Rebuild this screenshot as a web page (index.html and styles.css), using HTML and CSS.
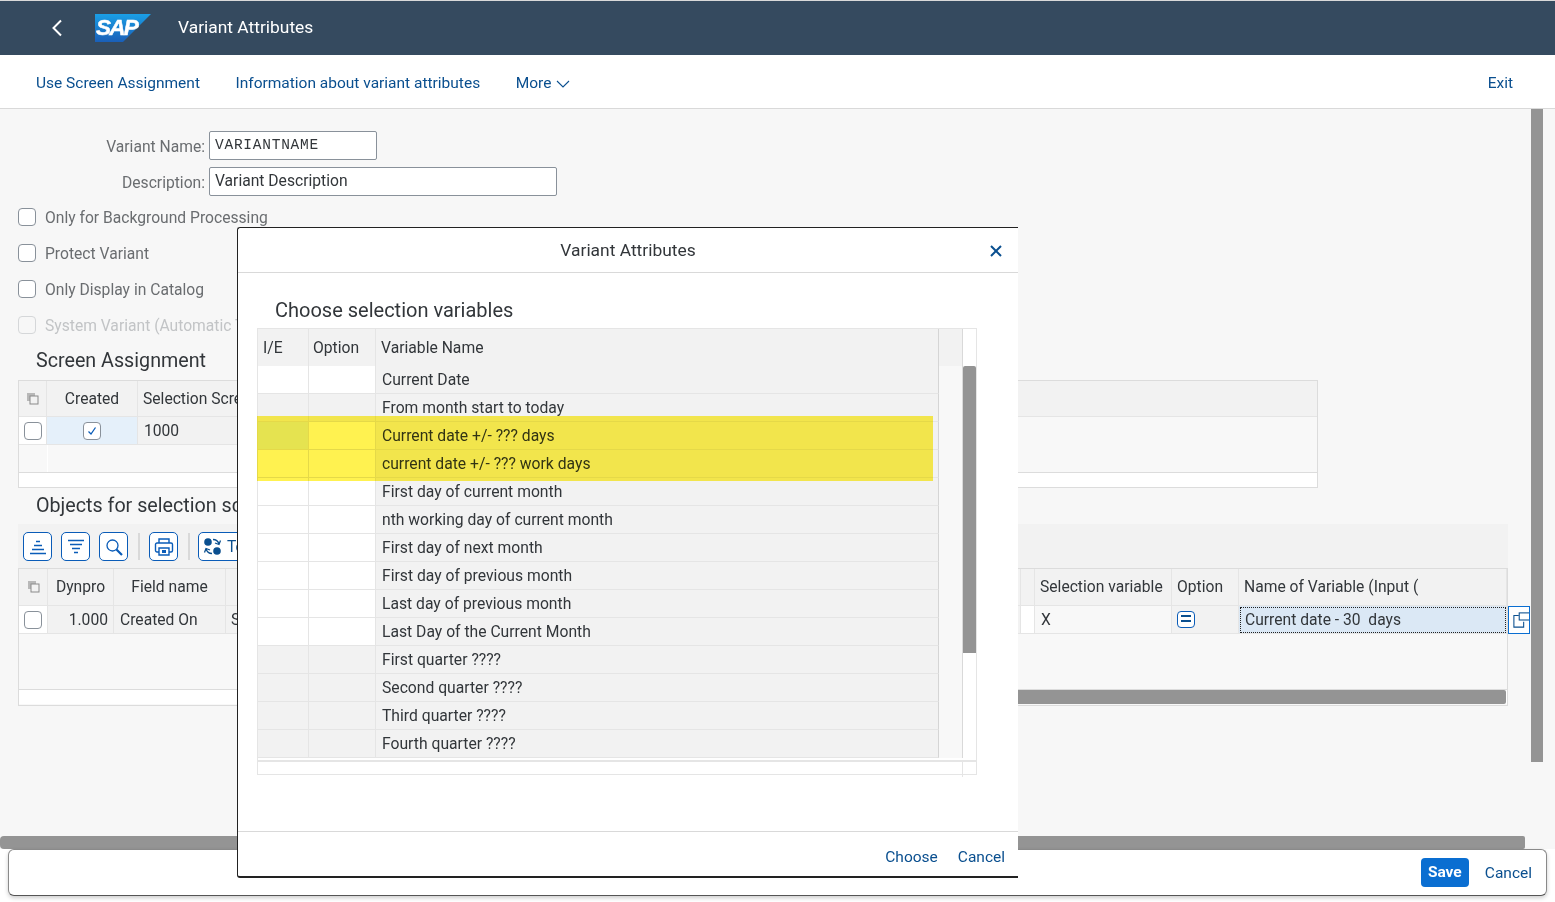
FILE: index.html
```html
<!DOCTYPE html>
<html lang="en">
<head>
<meta charset="utf-8">
<title>Variant Attributes</title>
<link rel="stylesheet" href="styles.css">
</head>
<body>
<div class="page">
  <header class="shell">
    <svg class="back" width="12" height="18" viewBox="0 0 12 18"><path d="M10 1.500 2.500 9l7.500 7.500" fill="none" stroke="#fff" stroke-width="2"/></svg>
    <div class="logo"><svg width="56" height="28" viewBox="0 0 56 28"><defs><linearGradient id="g" x1="0" y1="0" x2="0" y2="1"><stop offset="0" stop-color="#1a9fe6"/><stop offset="1" stop-color="#1a5fb8"/></linearGradient></defs><polygon points="0,0 56,0 28,28 0,28" fill="url(#g)"/></svg><span class="logo-text">SAP</span></div>
    <div class="shell-title">Variant Attributes</div>
  </header>
  <nav class="actions">
    <a class="act">Use Screen Assignment</a>
    <a class="act">Information about variant attributes</a>
    <a class="act">More <svg class="caret" width="14" height="8" viewBox="0 0 14 8"><path d="M1 1l6 6 6-6" fill="none" stroke="#0a4f8f" stroke-width="1.100"/></svg></a>
    <a class="act exit">Exit</a>
  </nav>
  <main class="content">
    <div class="field"><label class="flabel">Variant Name:</label><div class="input name mono">VARIANTNAME</div></div>
    <div class="field second"><label class="flabel">Description:</label><div class="input desc">Variant Description</div></div>
    <div class="checks">
      <div class="check"><span class="box"></span>Only for Background Processing</div>
      <div class="check"><span class="box"></span>Protect Variant</div>
      <div class="check"><span class="box"></span>Only Display in Catalog</div>
      <div class="check off"><span class="box"></span>System Variant (Automatic Transport)</div>
    </div>
    <h2 class="title">Screen Assignment</h2>
    <section class="tbl one">
      <div class="row head r1">
        <div class="cell sel"><svg width="13" height="13" viewBox="0 0 13 13"><rect x="1" y="1" width="8" height="8" fill="#b8b8b8"/><rect x="4" y="4" width="8" height="8" fill="#f2f2f2" stroke="#8a8a8a"/></svg></div>
        <div class="cell ctr">Created</div>
        <div class="cell">Selection Screen</div>
        <div class="cell rest"></div>
      </div>
      <div class="row body r1">
        <div class="cell white"><span class="box"></span></div>
        <div class="cell ctr blue"><span class="box small"><svg width="12" height="12" viewBox="0 0 12 12"><path d="M2.500 6.500 5 9l4.500-6.500" fill="none" stroke="#0a5cb8" stroke-width="1.300"/></svg></span></div>
        <div class="cell lead">1000</div>
        <div class="cell blank"></div>
      </div>
      <div class="empty"></div>
      <div class="tfoot"></div>
    </section>
    <h2 class="title second-title">Objects for selection screen</h2>
    <div class="tools">
      <span class="tool"><svg width="20" height="16" viewBox="0 0 20 16"><path d="M8 2.500h4M6 6.500h8M4 10.500h12M2 14.500h16" stroke="#0a5cb8" stroke-width="1.600" fill="none"/></svg></span>
      <span class="tool"><svg width="20" height="16" viewBox="0 0 20 16"><path d="M2 1.500h16M4 5.500h12M6 9.500h8M8 13.500h4" stroke="#0a5cb8" stroke-width="1.600" fill="none"/></svg></span>
      <span class="tool"><svg width="18" height="18" viewBox="0 0 18 18"><circle cx="7.500" cy="7.500" r="5.500" fill="none" stroke="#0a5cb8" stroke-width="1.300"/><path d="M11.500 11.500 17 17" stroke="#0a5cb8" stroke-width="2.200"/></svg></span>
      <span class="sep"></span>
      <span class="tool"><svg width="20" height="20" viewBox="0 0 20 20"><path d="M5 6V2h10v4M5 15H3a1.500 1.500 0 0 1-1.500-1.500V7.500A1.500 1.500 0 0 1 3 6h14a1.500 1.500 0 0 1 1.500 1.500v6A1.500 1.500 0 0 1 17 15h-2M5 11h10v7H5z" fill="none" stroke="#0a5cb8" stroke-width="1.400"/><rect x="8" y="13" width="4" height="3" fill="#0a5cb8"/></svg></span>
      <span class="sep"></span>
      <span class="tool wide"><svg width="19" height="19" viewBox="0 0 19 19"><circle cx="5" cy="5" r="3.800" fill="#0a4f8f"/><circle cx="14" cy="14" r="3.800" fill="#0a4f8f"/><path d="M10 2.500c3 0 5 1.500 6 4.500M17.500 3.500 16 7.500l-4-1.500M9 16.500c-3 0-5-1.500-6-4.500M1.500 15.500 3 11.500l4 1.500" fill="none" stroke="#0a4f8f" stroke-width="1.300"/></svg><span class="tool-text">Technical</span></span>
    </div>
    <section class="tbl two">
      <div class="row head r2">
        <div class="cell sel"><svg width="13" height="13" viewBox="0 0 13 13"><rect x="1" y="1" width="8" height="8" fill="#b8b8b8"/><rect x="4" y="4" width="8" height="8" fill="#f2f2f2" stroke="#8a8a8a"/></svg></div>
        <div class="cell ctr">Dynpro</div>
        <div class="cell ctr">Field name</div>
        <div class="cell"></div>
        <div class="cell"></div>
        <div class="cell">Selection variable</div>
        <div class="cell">Option</div>
        <div class="cell">Name of Variable (Input (</div>
      </div>
      <div class="row body r2">
        <div class="cell white"><span class="box"></span></div>
        <div class="cell end">1.000</div>
        <div class="cell">Created On</div>
        <div class="cell">S</div>
        <div class="cell white"></div>
        <div class="cell soft">X</div>
        <div class="cell"><span class="opt"></span></div>
        <div class="cell focus">Current date - 30&nbsp; days</div>
      </div>
      <div class="spacer"></div>
      <div class="track"><div class="thumb"></div></div>
      <span class="pop"><svg width="18" height="18" viewBox="0 0 18 18"><path d="M6.500 4H1v13h11v-6" fill="none" stroke="#0a4f8f" stroke-width="1.200"/><rect x="7" y="1" width="12" height="8" fill="#fff" stroke="#0a4f8f" stroke-width="1.200"/></svg></span>
    </section>
  </main>
  <div class="hbar"></div>
  <div class="vbar"></div>
  <footer class="bar">
    <span class="save">Save</span>
    <a class="cancel">Cancel</a>
  </footer>
  <div class="dialog">
    <div class="dhead">
      <span class="dtitle">Variant Attributes</span>
      <svg class="close" width="12" height="12" viewBox="0 0 12 12"><path d="M1 1l10 10M11 1 1 11" stroke="#0a4f8f" stroke-width="2" fill="none"/></svg>
    </div>
    <div class="dbody">
      <h3 class="dsub">Choose selection variables</h3>
      <div class="list">
        <div class="lrow lhead"><div>I/E</div><div>Option</div><div>Variable Name</div><div class="lgap"></div></div>
        <div class="lrow w"><div></div><div></div><div>Current Date</div><div class="lgap"></div></div>
        <div class="lrow g"><div></div><div></div><div>From month start to today</div><div class="lgap"></div></div>
        <div class="lrow h1"><div></div><div></div><div>Current date +/- ??? days</div><div class="lgap"></div></div>
        <div class="lrow w"><div></div><div></div><div>current date +/- ??? work days</div><div class="lgap"></div></div>
        <div class="lrow w"><div></div><div></div><div>First day of current month</div><div class="lgap"></div></div>
        <div class="lrow w"><div></div><div></div><div>nth working day of current month</div><div class="lgap"></div></div>
        <div class="lrow w"><div></div><div></div><div>First day of next month</div><div class="lgap"></div></div>
        <div class="lrow w"><div></div><div></div><div>First day of previous month</div><div class="lgap"></div></div>
        <div class="lrow w"><div></div><div></div><div>Last day of previous month</div><div class="lgap"></div></div>
        <div class="lrow w"><div></div><div></div><div>Last Day of the Current Month</div><div class="lgap"></div></div>
        <div class="lrow g"><div></div><div></div><div>First quarter ????</div><div class="lgap"></div></div>
        <div class="lrow g"><div></div><div></div><div>Second quarter ????</div><div class="lgap"></div></div>
        <div class="lrow g"><div></div><div></div><div>Third quarter ????</div><div class="lgap"></div></div>
        <div class="lrow g"><div></div><div></div><div>Fourth quarter ????</div><div class="lgap"></div></div>
        <div class="lfoot"><div></div><div></div></div>
        <div class="lscroll"></div>
        <div class="lscroll-head"></div>
        <div class="mark"></div>
      </div>
    </div>
    <div class="dfoot"><a class="act">Choose</a><a class="act">Cancel</a></div>
  </div>
</div>
</body>
</html>
```
FILE: styles.css
```css
* { box-sizing: border-box; }
html, body { margin: 0; padding: 0; }
body { font-family: Roboto, "Noto Sans", sans-serif; font-size: 15.5px; color: #32363a; background: #fff; }
.page { position: relative; width: 1555px; height: 902px; overflow: hidden; background: #fff; }

.shell { height: 55px; background: #354a5f; border-top: 1px solid #d9d9d9; display: flex; align-items: center; color: #fff; padding-left: 51px; }
.back { flex: none; margin-right: 32px; }
.logo { position: relative; width: 56px; height: 28px; margin-right: 27px; flex: none; }
.logo svg { display: block; }
.logo-text { position: absolute; left: 1px; top: 0; font: italic 700 22.5px/27px "Liberation Sans", sans-serif; letter-spacing: -1.800px; color: #fff; -webkit-text-stroke: .5px #fff; }
.shell-title { font-size: 17.4px; padding-bottom: 2px; }

.actions { height: 54px; border-bottom: 1px solid #d9d9d9; display: flex; align-items: center; padding: 2px 42px 0 36px; gap: 35.5px; background: #fff; }
.act { color: #0a4f8f; }
.caret { margin-left: 1px; }
.exit { margin-left: auto; }

.content { height: 740px; background: #f7f7f7; padding-top: 22px; font-size: 15.65px; }
.field { display: flex; align-items: center; height: 29px; color: #6a6d70; }
.second { margin-top: 7px; }
.flabel { width: 205px; text-align: right; margin-right: 4px; padding-top: 1px; flex: none; }
.input { height: 29px; background: #fff; border: 1px solid #89919a; border-radius: 2px; color: #32363a; padding: 0 5px; line-height: 26px; }
.name { width: 168px; }
.desc { width: 348px; }
.mono { font-family: "Liberation Mono", monospace; font-size: 14.500px; letter-spacing: .75px; line-height: 27px; }

.checks { margin-top: 3px; padding-left: 18px; }
.check { height: 36px; display: flex; align-items: center; gap: 9px; color: #6a6d70; }
.box { display: block; width: 18px; height: 18px; background: #fff; border: 1px solid #89919a; border-radius: 4px; flex: none; }
.off { color: #c2c4c6; }
.off .box { border-color: #d5d7d9; background: #f7f7f7; }

.title { margin: 0; height: 37px; line-height: 36px; padding-left: 36px; font-size: 19.7px; font-weight: 400; color: #32363a; }
.second-title { height: 36px; }

.tbl { position: relative; margin-left: 18px; background: #f8f8f8; border: 1px solid #dcdcdc; }
.one { width: 1300px; height: 108px; }
.two { width: 1490px; height: 138px; }
.row { display: grid; }
.r1 { grid-template-columns: 28px 91px 863px 1fr; }
.r2 { grid-template-columns: 29px 66px 112px 795px 14px 137px 67px 1fr; }
.head { height: 36px; }
.two .head { height: 37px; }
.head .cell { padding-bottom: 1px; }
.body { height: 28px; }
.empty { height: 28px; border-bottom: 1px solid #dcdcdc; background: linear-gradient(90deg, transparent 28px, #fff 28px, #fff 29px, transparent 29px); }
.cell { display: flex; align-items: center; padding: 0 5px; background: #f2f2f2; border-right: 1px solid #e5e5e5; border-bottom: 1px solid #e5e5e5; white-space: nowrap; overflow: hidden; }
.ctr { justify-content: center; }
.end { justify-content: flex-end; }
.lead { padding-left: 6px; }
.body .cell:nth-child(3) { padding-left: 6px; }
.soft { padding-left: 6px; }
.sel { justify-content: center; }
.white { background: #fff; }
.blue { background: #e5f0fa; }
.soft { background: #f8f8f8; }
.blank { background: #f8f8f8; border: 0; }
.rest { border-right: 0; }
.tfoot { height: 14px; background: #fff; }
.small { display: flex; align-items: center; justify-content: center; }
.focus { background: #dbe8f5; outline: 1px dotted #222; outline-offset: -2px; padding-left: 6px; }
.opt { display: block; width: 18px; height: 17px; border: 1.500px solid #0a5cb8; border-radius: 4px; background: linear-gradient(#fff 3px, #0a4f8f 3px, #0a4f8f 5px, #fff 5px, #fff 8px, #0a4f8f 8px, #0a4f8f 10px, #fff 10px); background-size: 10px 100%; background-position: center; background-repeat: no-repeat; background-color: #fff; }
.spacer { height: 55px; }
.track { height: 15px; background: #fff; border-top: 1px solid #dcdcdc; padding-left: 400px; }
.thumb { height: 14px; background: #949494; border-radius: 0 2px 2px 0; margin-right: 1px; }
.pop { position: absolute; left: 1489px; top: 37px; width: 22px; height: 28px; background: #fff; border: 1px solid #0a6ed1; display: flex; align-items: center; padding-left: 4px; overflow: hidden; }

.tools { width: 1490px; height: 44px; margin-left: 18px; background: #f2f2f2; display: flex; align-items: center; padding: 0 5px; }
.tool { width: 29px; height: 29px; border: 1px solid #0a5cb8; border-radius: 5px; background: #fff; display: flex; align-items: center; justify-content: center; margin-right: 9px; flex: none; margin-top: 1px; }
.tool.wide { width: 120px; justify-content: flex-start; padding-left: 4px; gap: 5px; }
.tool-text { color: #0a4f8f; }
.sep { width: 2px; height: 27px; background: #d9d9d9; margin: 1px 9px 0 1px; flex: none; }
.sep + .wide { margin-left: -1px; }

.hbar { position: absolute; left: 0; top: 836px; width: 1525px; height: 13px; background: #949494; border-radius: 4px 2px 2px 4px; }
.vbar { position: absolute; left: 1531px; top: 109px; width: 12px; height: 653px; background: #949494; }

.bar { position: absolute; left: 8px; top: 849px; width: 1539px; height: 47px; background: #fff; border: 1px solid #8a8a8a; border-bottom-color: #555; border-radius: 6px; box-shadow: 0 2px 4px rgba(0,0,0,.2); display: flex; align-items: center; justify-content: flex-end; padding-right: 14px; gap: 16px; }
.save { width: 48px; height: 29px; line-height: 28px; text-align: center; background: #0a6ed1; color: #fff; font-weight: 700; border-radius: 4px; }
.cancel { color: #0a4f8f; }

.dialog { position: absolute; left: 237px; top: 227px; width: 781px; height: 651px; background: #fff; border-left: 1px solid #222; border-top: 1px solid #222; border-bottom: 2px solid #222; border-radius: 3px 0 0 3px; display: flex; flex-direction: column; }
.dhead { height: 45px; flex: none; border-bottom: 1px solid #d9d9d9; display: flex; align-items: center; justify-content: center; position: relative; padding-bottom: 1px; }
.dtitle { font-size: 17.4px; }
.close { position: absolute; left: 752px; top: 17px; }
.dbody { flex: 1; padding-left: 19px; }
.dsub { margin: 0; height: 55px; padding: 24px 0 0 18px; line-height: 26px; font-size: 20px; font-weight: 400; }
.list { position: relative; width: 720px; height: 447px; border: 1px solid #e5e5e5; font-size: 15.7px; }
.lrow { display: grid; grid-template-columns: 51px 67px 563px 24px; height: 28px; }
.lrow > div { display: flex; align-items: center; padding: 0 5px; border-right: 1px solid #e5e5e5; border-bottom: 1px solid #e5e5e5; white-space: nowrap; }
.lrow > div:nth-child(3) { background: #f2f2f2; padding-left: 6px; border-right-color: #d5d5d5; }
.lrow > .lgap { background: #f8f8f8; border-bottom: 0; padding: 0; }
.lhead { height: 37px; }
.lhead > div { background: #f2f2f2; border-bottom: 0 !important; }
.lhead > div:nth-child(2) { padding-left: 4px; }
.lhead > div:nth-child(3) { padding-left: 5px; }
.lhead > .lgap { background: #f2f2f2; }
.g > div:nth-child(-n+2) { background: #f2f2f2; }
.h1 > div:first-child { background: #e5f0ff; }
.lfoot { display: grid; grid-template-columns: 705px 1fr; height: 17px; border-top: 2px solid #e5e5e5; margin-top: 2px; }
.lfoot > div:first-child { border-right: 1px solid #e5e5e5; }
.lscroll { position: absolute; left: 705px; top: 37px; width: 13px; height: 287px; background: #949494; border-radius: 2px 2px 0 0; }
.lscroll-head { position: absolute; left: 704px; top: 0; bottom: 16px; width: 1px; background: #d9d9d9; }
.mark { position: absolute; left: -1px; top: 87px; width: 676px; height: 65px; background: #fff250; mix-blend-mode: multiply; }
.dfoot { height: 45px; flex: none; border-top: 1px solid #d9d9d9; display: flex; align-items: center; justify-content: flex-end; gap: 20px; padding: 5px 13px 0 0; }
```
